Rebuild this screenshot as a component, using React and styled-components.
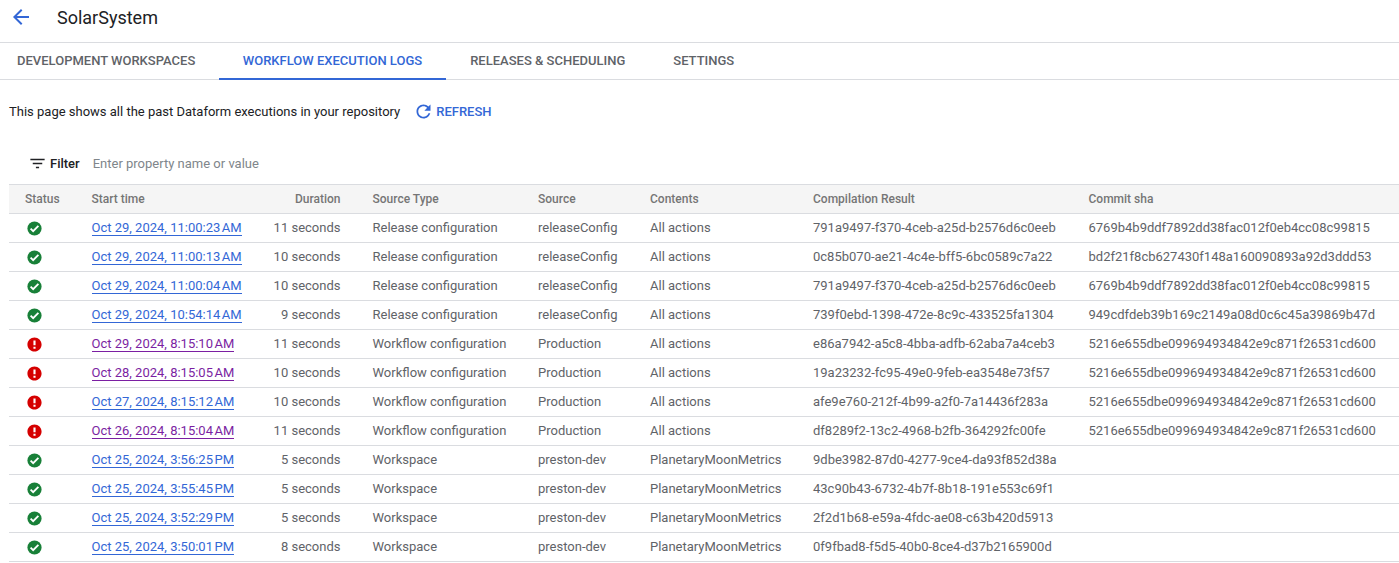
import React from 'react';
import styled, { createGlobalStyle } from 'styled-components';

const BLUE = '#3367d6';
const rows = [
  ['ok', 'Oct 29, 2024, 11:00:23\u202fAM', false, '11 seconds', 'Release configuration', 'releaseConfig', 'All actions', '791a9497-f370-4ceb-a25d-b2576d6c0eeb', '6769b4b9ddf7892dd38fac012f0eb4cc08c99815'],
  ['ok', 'Oct 29, 2024, 11:00:13\u202fAM', false, '10 seconds', 'Release configuration', 'releaseConfig', 'All actions', '0c85b070-ae21-4c4e-bff5-6bc0589c7a22', 'bd2f21f8cb627430f148a160090893a92d3ddd53'],
  ['ok', 'Oct 29, 2024, 11:00:04\u202fAM', false, '10 seconds', 'Release configuration', 'releaseConfig', 'All actions', '791a9497-f370-4ceb-a25d-b2576d6c0eeb', '6769b4b9ddf7892dd38fac012f0eb4cc08c99815'],
  ['ok', 'Oct 29, 2024, 10:54:14\u202fAM', false, '9 seconds', 'Release configuration', 'releaseConfig', 'All actions', '739f0ebd-1398-472e-8c9c-433525fa1304', '949cdfdeb39b169c2149a08d0c6c45a39869b47d'],
  ['err', 'Oct 29, 2024, 8:15:10\u202fAM', true, '11 seconds', 'Workflow configuration', 'Production', 'All actions', 'e86a7942-a5c8-4bba-adfb-62aba7a4ceb3', '5216e655dbe099694934842e9c871f26531cd600'],
  ['err', 'Oct 28, 2024, 8:15:05\u202fAM', true, '10 seconds', 'Workflow configuration', 'Production', 'All actions', '19a23232-fc95-49e0-9feb-ea3548e73f57', '5216e655dbe099694934842e9c871f26531cd600'],
  ['err', 'Oct 27, 2024, 8:15:12\u202fAM', false, '10 seconds', 'Workflow configuration', 'Production', 'All actions', 'afe9e760-212f-4b99-a2f0-7a14436f283a', '5216e655dbe099694934842e9c871f26531cd600'],
  ['err', 'Oct 26, 2024, 8:15:04\u202fAM', true, '11 seconds', 'Workflow configuration', 'Production', 'All actions', 'df8289f2-13c2-4968-b2fb-364292fc00fe', '5216e655dbe099694934842e9c871f26531cd600'],
  ['ok', 'Oct 25, 2024, 3:56:25\u202fPM', false, '5 seconds', 'Workspace', 'preston-dev', 'PlanetaryMoonMetrics', '9dbe3982-87d0-4277-9ce4-da93f852d38a', ''],
  ['ok', 'Oct 25, 2024, 3:55:45\u202fPM', false, '5 seconds', 'Workspace', 'preston-dev', 'PlanetaryMoonMetrics', '43c90b43-6732-4b7f-8b18-191e553c69f1', ''],
  ['ok', 'Oct 25, 2024, 3:52:29\u202fPM', false, '5 seconds', 'Workspace', 'preston-dev', 'PlanetaryMoonMetrics', '2f2d1b68-e59a-4fdc-ae08-c63b420d5913', ''],
  ['ok', 'Oct 25, 2024, 3:50:01\u202fPM', false, '8 seconds', 'Workspace', 'preston-dev', 'PlanetaryMoonMetrics', '0f9fbad8-f5d5-40b0-8ce4-d37b2165900d', ''],
];

const GlobalStyle = createGlobalStyle`
  html, body {
    margin: 0;
    padding: 0;
    background: #fff;
    font-family: Roboto, "Liberation Sans", sans-serif;
    overflow: hidden;
  }
`;

const Page = styled.div`
  width: 1399px;
  height: 563px;
  overflow: hidden;
`;

const Header = styled.header`
  display: flex;
  align-items: center;
  height: 42px;
  padding-left: 9px;
  border-bottom: 1px solid #dadce0;
`;

const BackIcon = styled.svg`
  width: 24px;
  height: 24px;
  fill: ${BLUE};
  margin-right: 24px;
  margin-top: -8px;
`;

const Title = styled.h1`
  margin: -8px 0 0;
  font-size: 18px;
  font-weight: 400;
  color: #202124;
`;

const Tabs = styled.nav`
  display: flex;
  height: 36px;
  border-bottom: 1px solid #dadce0;
`;

const Tab = styled.div`
  display: flex;
  align-items: center;
  box-sizing: border-box;
  padding: 0 24px ${(p) => (p.$active ? '1px' : '2px')};
  height: ${(p) => (p.$active ? '37px' : '36px')};
  font-size: 13px;
  font-weight: 500;
  color: ${(p) => (p.$active ? BLUE : '#5f6368')};
  border-bottom: ${(p) => (p.$active ? `2px solid ${BLUE}` : '0')};
  &:first-child {
    padding-left: 17px;
    padding-right: 23.5px;
  }
`;

const InfoBar = styled.div`
  display: flex;
  align-items: center;
  height: 62px;
  padding: 0 0 2px 9px;
  font-size: 13px;
  color: #202124;
`;

const RefreshButton = styled.button`
  display: flex;
  align-items: center;
  gap: 2px;
  margin-left: 14px;
  padding: 0;
  border: 0;
  background: none;
  font: 500 13px Roboto, "Liberation Sans", sans-serif;
  color: ${BLUE};
  svg {
    width: 21px;
    height: 21px;
    margin-left: -1px;
    fill: ${BLUE};
  }
`;

const FilterBar = styled.div`
  display: flex;
  align-items: center;
  height: 38px;
  padding: 0 0 2px 28px;
  font-size: 13px;
`;

const FilterIcon = styled.svg`
  width: 19px;
  height: 19px;
  fill: #202124;
  margin-right: 3px;
`;

const FilterLabel = styled.span`
  font-weight: 500;
  color: #202124;
  margin-right: 13px;
`;

const FilterHint = styled.span`
  color: #80868b;
`;

const Table = styled.div`
  margin-left: 9px;
  border-top: 1px solid #dadce0;
`;

const Row = styled.div`
  display: grid;
  grid-template-columns: 66.5px 150px 131px 165.5px 112px 163px 275.5px 1fr;
  align-items: center;
  height: 26px;
  padding: 0 0 2px 16px;
  border-bottom: 1px solid #dadce0;
  font-size: 13px;
  color: #5f6368;
  white-space: nowrap;
`;

const HeadRow = styled(Row)`
  height: 28px;
  padding-bottom: 0;
  background: #f5f5f5;
  font-weight: 500;
  font-size: 12px;
  color: #757575;
`;

const Duration = styled.div`
  text-align: right;
  padding-right: 32px;
`;

const StatusIcon = styled.svg`
  display: block;
  width: 17px;
  height: 17px;
  margin: 2px 0 0 1px;
  fill: ${(p) => (p.$kind === 'ok' ? '#188038' : '#d50000')};
`;

const CheckMark = styled.path`
  fill: none;
  stroke: #fff;
  stroke-width: 2.6;
`;

const TimeLink = styled.a`
  justify-self: start;
  color: ${(p) => (p.$visited ? '#7b1fa2' : BLUE)};
  text-decoration: none;
  border-bottom: 1px solid currentColor;
  line-height: 15px;
`;

const errPath = 'M12 2C6.48 2 2 6.48 2 12s4.48 10 10 10 10-4.48 10-10S17.52 2 12 2zm1.5 16h-3v-3h3v3zm0-5h-3V6.5h3V13z';

export default function App() {
  return (
    <Page>
      <GlobalStyle />
      <Header>
        <BackIcon viewBox="0 0 24 24">
          <path d="M20 11H7.83l5.59-5.59L12 4l-8 8 8 8 1.41-1.41L7.83 13H20v-2z" />
        </BackIcon>
        <Title>SolarSystem</Title>
      </Header>
      <Tabs>
        <Tab>DEVELOPMENT WORKSPACES</Tab>
        <Tab $active>WORKFLOW EXECUTION LOGS</Tab>
        <Tab>RELEASES &amp; SCHEDULING</Tab>
        <Tab>SETTINGS</Tab>
      </Tabs>
      <InfoBar>
        This page shows all the past Dataform executions in your repository
        <RefreshButton>
          <svg viewBox="0 0 24 24">
            <path d="M17.65 6.35C16.2 4.9 14.21 4 12 4c-4.42 0-7.99 3.58-7.99 8s3.57 8 7.99 8c3.73 0 6.84-2.55 7.73-6h-2.08c-.82 2.33-3.04 4-5.65 4-3.31 0-6-2.69-6-6s2.69-6 6-6c1.66 0 3.14.69 4.22 1.78L13 11h7V4l-2.35 2.35z" />
          </svg>
          REFRESH
        </RefreshButton>
      </InfoBar>
      <FilterBar>
        <FilterIcon viewBox="0 0 24 24">
          <path d="M10 18h4v-2h-4v2zM3 6v2h18V6H3zm3 7h12v-2H6v2z" />
        </FilterIcon>
        <FilterLabel>Filter</FilterLabel>
        <FilterHint>Enter property name or value</FilterHint>
      </FilterBar>
      <Table>
        <HeadRow>
          <div>Status</div>
          <div>Start time</div>
          <Duration>Duration</Duration>
          <div>Source Type</div>
          <div>Source</div>
          <div>Contents</div>
          <div>Compilation Result</div>
          <div>Commit sha</div>
        </HeadRow>
        {rows.map((r, i) => (
          <Row key={i}>
            <StatusIcon viewBox="0 0 24 24" $kind={r[0]}>
              {r[0] === 'ok' ? (
                <>
                  <circle cx="12" cy="12" r="10" />
                  <CheckMark d="M6.5 12.2l3.6 3.6 7.4-7.4" />
                </>
              ) : (
                <path d={errPath} />
              )}
            </StatusIcon>
            <div>
              <TimeLink $visited={r[2]}>{r[1]}</TimeLink>
            </div>
            <Duration>{r[3]}</Duration>
            <div>{r[4]}</div>
            <div>{r[5]}</div>
            <div>{r[6]}</div>
            <div>{r[7]}</div>
            <div>{r[8]}</div>
          </Row>
        ))}
      </Table>
    </Page>
  );
}
